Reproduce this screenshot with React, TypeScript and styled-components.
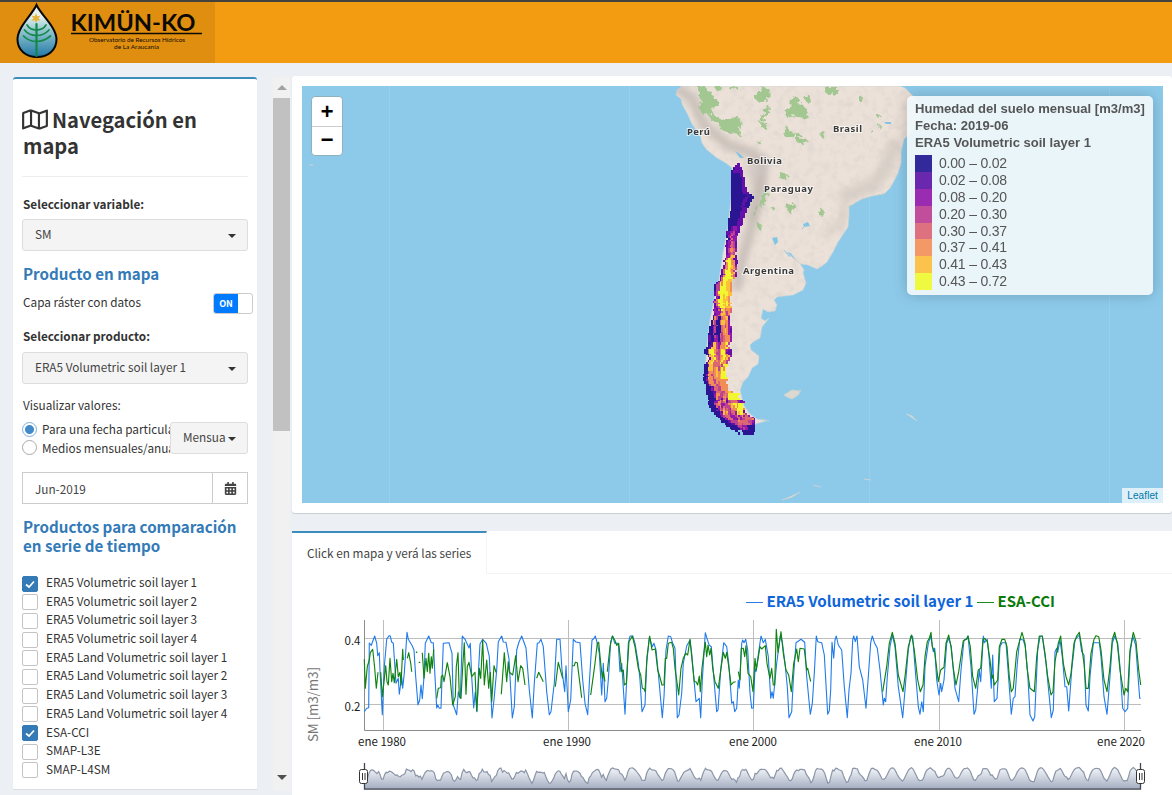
import React from "react";
import styled, { createGlobalStyle } from "styled-components";
import { FaRegMap, FaCalendarAlt } from "react-icons/fa";

const sans = `"Noto Sans CJK SC", "Noto Sans", sans-serif`;

const GlobalStyle = createGlobalStyle`
  *, *::before, *::after { box-sizing: border-box; }
  body {
    margin: 0;
    background: #ecf0f5;
    color: #333;
    font: 11.78px/18px ${sans};
    overflow: hidden;
  }
`;

const Page = styled.div`
  display: flex;
  flex-direction: column;
  width: 1172px;
  height: 795px;
  overflow: hidden;
`;

const Header = styled.header`
  flex: none;
  height: 63px;
  background: #f39c12;
  border-top: 2px solid #43423c;
`;

const Brand = styled.div`
  width: 215px;
  height: 61px;
  background: #e08e0f;
`;

const Content = styled.div`
  flex: 1;
  min-height: 0;
  display: flex;
`;

const Sidebar = styled.aside`
  width: 244px;
  height: 712px;
  margin: 14px 15px 0 13px;
  padding: 0 9px;
  background: #fff;
  border-top: 2px solid #3c8dbc;
  border-radius: 3px 3px 0 0;
  box-shadow: 0 1px 1px rgba(0, 0, 0, 0.08);
`;

const Title = styled.h2`
  height: 98px;
  margin: 0;
  padding: 28px 0 0 1px;
  border-bottom: 1px solid #eee;
  font-size: 20.15px;
  font-weight: 700;
  line-height: 25.5px;
  white-space: nowrap;

  svg {
    width: 26px;
    height: 23px;
    margin: 0 4px 0 -1px;
    vertical-align: -3px;
  }
`;

const Subtitle = styled.h4<{ $top: number }>`
  margin: ${(p) => p.$top}px 0 0;
  padding-left: 1px;
  color: #337ab7;
  font-size: 15.15px;
  font-weight: 700;
  line-height: 19px;
  white-space: nowrap;
`;

const Label = styled.div<{ $top: number; $bold?: boolean }>`
  margin-top: ${(p) => p.$top}px;
  padding-left: 1px;
  font-weight: ${(p) => (p.$bold ? 700 : 400)};
  line-height: 18px;
  white-space: nowrap;
`;

const SwitchRow = styled.div`
  display: flex;
  justify-content: space-between;
  align-items: flex-start;
  margin: 10px -5px 0 0;
  padding-left: 1px;
`;

const Switch = styled.div`
  display: flex;
  width: 40px;
  height: 21px;
  border: 1px solid #ccc;
  border-radius: 3px;
  overflow: hidden;
  background: #fff;

  span {
    width: 24px;
    background: #007bff;
    color: #fff;
    font: 700 9px/19px ${sans};
    text-align: center;
  }
`;

const Select = styled.div<{ $top?: number; $width?: number }>`
  display: flex;
  justify-content: space-between;
  align-items: center;
  width: ${(p) => p.$width ?? 226}px;
  height: 32px;
  margin-top: ${(p) => p.$top ?? 0}px;
  padding: 0 11px 3px 12px;
  border: 1px solid #ddd;
  border-radius: 3px;
  background: #f4f4f4;
  color: #444;
  white-space: nowrap;
`;

const Caret = styled.i`
  border: 4px solid transparent;
  border-top-color: #333;
  border-bottom: 0;
  margin-top: 4px;
`;

const PeriodRow = styled.div`
  display: flex;
  height: 40px;
  margin-top: 6px;
`;

const RadioList = styled.div`
  width: 148px;
  overflow: hidden;
`;

const RadioItem = styled.div`
  display: flex;
  align-items: center;
  gap: 5px;
  height: 18.5px;
  white-space: nowrap;
`;

const RadioDot = styled.i<{ $on?: boolean }>`
  flex: none;
  width: 15px;
  height: 15px;
  border: 1px solid ${(p) => (p.$on ? "#7fb0d8" : "#aaa")};
  border-radius: 50%;
  background: ${(p) => (p.$on ? "radial-gradient(circle, #428bca 4px, #fff 5px)" : "#fff")};
`;

const DateField = styled.div`
  display: flex;
  height: 32px;
  margin-top: 12px;
  border: 1px solid #ccc;
  color: #444;
  line-height: 31px;

  span { flex: 1; padding-left: 12px; }
  b {
    display: grid;
    place-items: center;
    width: 35px;
    border-left: 1px solid #ccc;
  }
`;

const CheckList = styled.div`
  margin-top: 19px;
`;

const CheckItem = styled.div`
  display: flex;
  gap: 8px;
  height: 18.7px;
  white-space: nowrap;
`;

const CheckBox = styled.i<{ $on?: boolean }>`
  width: 16px;
  height: 16px;
  margin-top: 1.5px;
  border: 1px solid ${(p) => (p.$on ? "#337ab7" : "#c4c4c4")};
  border-radius: 2px;
  background: ${(p) => (p.$on ? "#337ab7" : "#fff")};

  svg { display: block; }
`;

const CheckText = styled.span`
  line-height: 16px;
`;

const ScrollTrack = styled.div`
  display: flex;
  flex-direction: column;
  align-items: center;
  width: 17px;
  height: 714px;
  margin: 14px 3px 0 1px;
  background: #f1f1f1;
`;

const ScrollThumb = styled.div`
  width: 17px;
  height: 333px;
  margin-top: 8px;
  background: #c1c1c1;
`;

const ScrollArrow = styled.i<{ $down?: boolean }>`
  border: 5px solid transparent;
  ${(p) =>
    p.$down
      ? "border-top-color:#505050;border-bottom:0;margin-top:auto;margin-bottom:11px;"
      : "border-bottom-color:#a3a3a3;border-top:0;margin-top:8px;"}
`;

const Main = styled.main`
  flex: 1;
  min-width: 0;
  margin-left: -1px;
  display: flex;
  flex-direction: column;
`;

const MapBox = styled.section`
  position: relative;
  flex: none;
  height: 437px;
  margin-top: 13px;
  padding: 10px 9px 10px 10px;
  background: #fff;
  border-radius: 3px;
  box-shadow: 0 1px 1px rgba(0, 0, 0, 0.15);

  > svg { display: block; }
`;

const ZoomControl = styled.div`
  position: absolute;
  left: 19px;
  top: 20px;
  width: 32px;
  border: 1px solid #8fb0bf;
  border-radius: 4px;
  background: #fff;
`;

const ZoomButton = styled.div`
  display: grid;
  place-items: center;
  height: 29px;
  color: #000;
  font: 700 22px/28px "Liberation Mono", monospace;
  padding-top: 3px;

  & + & { border-top: 1px solid #ccc; padding-top: 1px; }
`;

const Legend = styled.div`
  position: absolute;
  left: 615px;
  top: 20px;
  width: 246px;
  height: 199px;
  padding: 4px 8px;
  border-radius: 5px;
  background: rgba(240, 248, 251, 0.94);
  box-shadow: 0 0 15px rgba(0, 0, 0, 0.2);
  color: #555;
  font: 14px/17px "Liberation Sans", sans-serif;
  white-space: nowrap;
`;

const LegendTitle = styled.div`
  font-size: 13.05px;
  font-weight: 700;
`;

const LegendRow = styled.div<{ $color: string }>`
  display: flex;
  gap: 7px;
  height: 16.9px;
  line-height: 16px;
  font-size: 14px;
  letter-spacing: -0.2px;

  &::before {
    content: "";
    width: 17px;
    background: ${(p) => p.$color};
  }
`;

const Scale = styled.div`
  padding-top: 4px;
`;

const Attribution = styled.div`
  position: absolute;
  right: 9px;
  bottom: 10px;
  padding: 0 5px;
  background: rgba(255, 255, 255, 0.7);
  color: #0078a8;
  font: 10px/15px "Liberation Sans", sans-serif;
  letter-spacing: 0.1px;
`;

const SeriesBox = styled.section`
  flex: 1;
  margin-top: 18px;
  background: #fff;
`;

const TabBar = styled.div`
  display: flex;
  height: 43px;
  border-bottom: 1px solid #f4f4f4;
`;

const Tab = styled.div`
  width: 195px;
  height: 43px;
  padding: 11px 0 0 15px;
  border-top: 2px solid #3c8dbc;
  border-right: 1px solid #f4f4f4;
  background: #fff;
  color: #444;
  white-space: nowrap;
`;

/* ---------- series data: coordinates are in thirds of a pixel ---------- */

type Point = [number, number];
const parse = (s: string, ox: number, oy: number): Point[] =>
  s.split(" ").map((p) => {
    const [x, y] = p.split(",").map(Number);
    return [ox + x / 3, oy + y / 3];
  });

const era5: Point[] = [
  ...parse("223,605 230,595 236,593 238,399 244,406 254,378 260,400 263,437 268,428 270,480 277,614 283,470 290,388 297,377 301,378 305,396 310,400 318,520 325,505 328,553 335,500 338,535 343,490 351,367 355,388 362,400 367,408 372,420 377,500 384,584 389,570 393,525 397,566 402,500 406,400 416,378 424,398 430,398 435,500 440,594 443,585 448,595 453,595 460,400 477,398 486,430 490,585 500,614 505,545 511,565 517,378 525,388 537,414 541,400 545,500 551,594 556,545 561,605 566,470 570,402 578,388 589,400 598,440 606,624 613,560 620,480 625,395 635,378 640,396 648,397 657,447 667,624 673,590 680,420 687,396 695,378 708,414 718,540 727,624 733,520 742,400 747,398 753,388 760,410 770,545 778,614 783,605 788,560 793,520 800,388 810,388 816,480 824,545 828,467 835,605 842,570 850,388 858,396 870,398 878,510 885,580 893,614 898,520", 290, 510),
  ...parse("36,180 41,176 46,168 52,190 58,220 65,345 70,250 75,365 80,355 85,300 92,185 98,168 104,190 115,190 120,275 125,250 135,403 140,300 145,190 150,168 158,168 165,190 175,250 180,300 186,395 195,375 200,250 208,172 217,200 222,190 228,210 235,280 247,413 252,350 258,210 265,168 272,170 278,190 285,205 292,413 297,405 305,340 310,250 320,198 330,180 335,220 342,300 348,365 358,355 362,413 367,300 376,158 382,178 388,196 394,200 402,300 410,395 414,390 422,270 431,188 440,200 446,250 455,370 460,365 464,395 470,385 475,300 478,325 485,190 488,180 492,188 497,178 503,210 510,340 515,385 520,384 525,265 528,275 536,215 543,168 550,188 556,178 565,230 572,355 576,335 580,355 590,250 601,168 607,185 615,250 622,320 627,413 635,395 640,300 648,188 663,178 674,187 680,290 691,403 697,370 703,280 709,168 713,185 725,188 733,225 743,403 748,392 752,330 756,187 761,235 765,180 769,168 775,195 785,210 793,320 802,413 807,330 813,280 818,180 821,168 826,185 831,168 838,260 848,300 858,385 865,290 872,188 877,168 884,190 892,205", 580, 580),
  ...parse("30,270 40,375 43,355 47,365 52,290 60,200 67,165 75,200 85,320 98,413 105,330 115,210 122,168 128,170 135,260 145,380 150,403 155,365 160,395 165,260 175,190 182,168 190,215 194,205 200,300 207,345 212,310 215,335 222,300 230,190 236,175 244,200 255,325 266,365 273,270 282,180 290,176 294,168 303,260 312,403 317,390 328,270 332,305 340,168 343,188 352,178 357,230 364,325 368,225 373,365 381,355 390,200 396,188 408,188 415,280 424,403 430,355 435,350 442,250 449,178 460,180 466,200 473,280 480,405 489,423 494,410 503,210 510,170 517,168 528,250 544,413 550,390 555,215 560,205 563,217 570,180 577,230 585,320 590,320 596,393 605,270 615,180 628,165 635,215 642,225 648,375 655,393 660,290 670,188 688,188 693,230 702,350 711,403 720,290 727,190 734,168 743,190 750,260 758,385 765,395 773,385 780,220 788,168 797,195 805,300 809,355 812,355", 870, 580),
];

const esa: Point[][] = [
  ...[
    "223,448 226,535 232,470 238,450 241,428 248,418 254,475 259,535 264,487",
    "272,487 277,560 287,467 291,515 295,525 300,445 305,515 309,490 313,518 320,448 325,500 330,487 333,525 338,418 340,450",
    "352,445 356,428 362,460 365,485",
    "378,428 382,425",
    "386,457 391,457",
    "397,428 402,505 408,445 412,485 416,430 420,490 424,440 427,475 431,418",
    "440,565 445,535 452,533 454,500 458,495 462,515 472,458 480,500 488,585 496,560 499,470 504,428 508,560 513,565 518,470 523,398 528,553 532,470 537,457 545,500 555,487 560,603 568,475 572,505 578,390 583,525 590,450 596,535 601,487 605,575 612,467 618,487",
    "634,553 643,428 650,515 655,455 658,487 668,495 677,437 684,515 692,467 698,475 705,525",
    "740,505 746,487 760,515",
    "796,530 805,457 818,505",
    "846,467 853,467 856,457 862,458 875,563",
  ].map((s) => parse(s, 290, 510)),
  ...[
    "32,345 45,250 52,190 56,187 62,250 67,295 70,275 75,305",
    "82,275 90,200 97,168 104,180 110,196 116,190 125,275 130,270 133,315 139,310 147,185 157,168 165,200 175,265 182,285 187,325 193,328 195,335 201,230 209,168 216,210 226,207 233,270 238,285 246,315 252,315 256,235 260,235 265,190 275,187 280,205 285,265 290,300 296,345 303,265 310,235 317,220 323,225 330,178 338,260 343,305 348,305 353,315 358,288 361,335 366,265 372,215 376,187 380,230 384,195 389,225 393,205 398,265 405,305 415,325 423,265 430,217 436,235 440,217 447,265 453,315 460,307 467,305",
    "475,275 480,300 484,205 490,205 494,230 498,197 504,280 512,290 519,335 525,235 529,270 540,200 545,207 556,197 561,250 570,295 575,265 580,315 584,315 589,148 594,217 603,155 610,220 618,270 626,285 634,335 641,250 650,207 655,245 660,205 673,207 680,270 683,265 692,305",
  ].map((s) => parse(s, 580, 580)),
  parse("38,335 50,260 58,190 67,157 75,190 85,285 99,335 105,290 115,200 125,165 133,210 143,300 151,335 159,315 165,230 172,185 178,175 183,157 187,200 194,215 205,305 212,270 222,262 228,190 236,165 243,200 250,265 258,315 266,275 272,235 280,182 290,178 294,168 301,200 308,290 317,325 325,270 332,265 339,178 344,175 352,185 360,240 366,295 369,285 373,315 383,300 388,200 396,178 404,178 411,200 418,290 424,335 430,325 440,215 456,157 465,190 472,270 480,325 493,335 500,230 508,168 517,168 525,220 533,290 543,345 549,335 555,245 565,190 572,168 580,250 588,290 596,315 603,280 612,190 620,168 628,157 635,200 642,250 648,325 655,325 663,220 672,178 678,167 686,170 693,210 702,300 711,335 720,260 727,178 734,157 742,190 750,270 762,345 767,325 773,335 780,210 790,157 798,185 806,270 812,315", 870, 580),
];

const valueAt = (pts: Point[], x: number): number | null => {
  for (let i = 1; i < pts.length; i++) {
    const [x0, y0] = pts[i - 1];
    const [x1, y1] = pts[i];
    if (x >= x0 && x <= x1) return y0 + ((y1 - y0) * (x - x0)) / (x1 - x0 || 1);
  }
  return null;
};

const toPath = (pts: Point[]) => "M" + pts.map(([x, y]) => `${x.toFixed(1)},${y.toFixed(1)}`).join("L");

const overview: Point[] = [];
for (let x = 364.5; x <= 1140.5; x += 1.55) {
  const values = [valueAt(era5, x), ...esa.map((s) => valueAt(s, x))].filter((v): v is number => v !== null);
  const mean = values.reduce((a, b) => a + b, 0) / values.length;
  overview.push([x, 767 + (mean - 632) * 0.2]);
}

/* ---------- raster layer: [y, first x, then "end x, class" pairs] ---------- */

const palette = ["#2a1593", "#6410a9", "#941aaa", "#bc4292", "#dc6672", "#f18e55", "#fcbf3b", "#f1f631"];

const upper: number[][] = [
  [250, 228, 240, 1], [270, 216, 222, 0, 246, 1], [290, 216, 242, 0, 252, 1], [310, 216, 241, 0, 252, 1],
  [330, 216, 247, 0, 262, 1], [345, 216, 262, 0, 269, 1, 278, 0], [358, 214, 250, 0, 260, 1, 276, 0], [370, 214, 242, 0, 254, 1, 270, 0],
  [390, 210, 240, 0, 258, 1], [410, 207, 236, 0, 250, 1], [430, 204, 230, 0, 250, 1], [442, 205, 213, 0, 222, 1, 232, 2, 240, 1],
  [456, 197, 207, 1, 215, 2, 225, 3, 238, 1], [470, 202, 207, 0, 212, 2, 218, 4, 230, 2], [490, 196, 204, 1, 210, 2, 218, 4, 225, 3, 229, 1],
  [510, 198, 203, 1, 208, 3, 218, 5, 222, 4, 227, 2], [530, 196, 200, 1, 205, 3, 217, 6, 222, 5, 230, 1], [545, 190, 195, 1, 200, 5, 218, 7, 224, 5, 233, 1],
  [565, 186, 190, 1, 195, 4, 216, 7, 222, 5, 229, 2], [590, 176, 182, 0, 187, 2, 193, 5, 212, 7, 218, 4, 225, 1],
];
const lower: number[][] = [
  [12, 183, 190, 1, 196, 4, 214, 7, 222, 5, 225, 3], [30, 172, 178, 1, 184, 4, 200, 7, 212, 6, 216, 5], [45, 163, 170, 0, 176, 3, 197, 7, 212, 6, 215, 5],
  [75, 166, 170, 1, 176, 3, 200, 7, 205, 6, 211, 5], [100, 160, 167, 1, 174, 4, 189, 7, 205, 6, 211, 5], [125, 161, 168, 1, 176, 2, 184, 4, 195, 6, 210, 5],
  [150, 152, 160, 0, 164, 5, 170, 3, 180, 0, 186, 4, 203, 6, 208, 5, 212, 2], [177, 148, 160, 0, 164, 2, 169, 3, 182, 0, 190, 4, 206, 5, 214, 2], [205, 142, 151, 1, 160, 0, 170, 2, 177, 0, 190, 4, 204, 5, 211, 2],
  [225, 140, 148, 0, 155, 3, 168, 6, 180, 2, 190, 5, 200, 6, 207, 3], [243, 134, 143, 0, 150, 4, 169, 7, 178, 3, 185, 5, 195, 7, 203, 5, 216, 1], [265, 146, 150, 1, 160, 6, 166, 7, 175, 4, 187, 5, 195, 7, 205, 5, 210, 2],
  [290, 132, 140, 0, 145, 2, 158, 6, 164, 4, 180, 5, 186, 5, 200, 7], [310, 131, 142, 0, 147, 2, 157, 5, 165, 3, 183, 5, 200, 7], [335, 132, 143, 0, 150, 3, 161, 5, 170, 3, 180, 5, 200, 5],
  [360, 137, 152, 0, 160, 1, 172, 4, 181, 3, 201, 5], [367, 141, 160, 0, 169, 1, 178, 5, 190, 3, 203, 4, 236, 7], [384, 141, 164, 0, 169, 1, 178, 5, 190, 3, 203, 4, 238, 7],
  [390, 145, 167, 0, 172, 2, 180, 4, 201, 5, 212, 3, 232, 4, 240, 2, 253, 1],
  [407, 150, 170, 0, 181, 3, 192, 4, 210, 3, 224, 5, 251, 7], [425, 160, 175, 0, 186, 2, 201, 5, 215, 3, 228, 4, 250, 7, 256, 3], [440, 172, 190, 0, 200, 2, 215, 4, 231, 2, 250, 3, 275, 4, 281, 2],
  [455, 185, 206, 0, 216, 1, 231, 3, 265, 4, 275, 3, 284, 1], [470, 208, 233, 0, 240, 2, 252, 3, 262, 2, 284, 0], [486, 237, 244, 0, 250, -1, 281, 0],
];
const rows = [
  ...upper.map((r) => r.map((v, i) => (i === 0 ? 80 + v / 3 : v))),
  ...lower.map((r) => r.map((v, i) => (i === 0 ? 270 + v / 3 : v))),
];

const noise = (a: number, b: number) => {
  const s = Math.sin(a * 12.9898 + b * 78.233) * 43758.5453;
  return s - Math.floor(s);
};

const cell = 1.7;
const cells: { x: number; y: number; c: number }[] = [];
for (let y = 163.2, j = 0; y < 433.5; y += cell, j++) {
  let k = 0;
  while (k < rows.length - 2 && rows[k + 1][0] <= y) k++;
  const a = rows[k];
  const b = rows[k + 1];
  const t = Math.max(0, Math.min(1, (y - a[0]) / (b[0] - a[0])));
  const near = t < 0.5 ? a : b;
  const south = y > 250;
  const band = Math.floor(j / 2);
  const edge = (noise(band, 9) - 0.5) * (south ? 6 : 4);
  const left = a[1] + (b[1] - a[1]) * t + edge;
  const ra = a[a.length - 2];
  const rb = b[b.length - 2];
  const right = ra + (rb - ra) * t + (noise(band, 17) - 0.5) * (south ? 5 : 4);
  const nr = near[near.length - 2];
  const first = Math.round(left / 3 / cell);
  const last = Math.round(right / 3 / cell);
  for (let i = first; i < last; i++) {
    const u = near[1] + ((i + 0.5 - first) / (last - first)) * (nr - near[1]);
    let c = 0;
    for (let m = 2; m < near.length; m += 2) {
      if (u <= near[m]) { c = near[m + 1]; break; }
    }
    if (c < 0) continue;
    const n = noise(i, Math.floor((j + (i % 3)) / 3));
    if (south && c > 0 && !(y > 391 && y < 399 && c === 7)) {
      if (n < 0.05) c = Math.max(1, c - 2);
      else if (n < 0.15) c = Math.max(1, c - 1);
      else if (n > 0.86) c = Math.min(7, c + 1);
    }
    cells.push({ x: 660 + i * cell, y, c });
  }
}

const land =
  "M682,86 L677,90 L676,95 L681,99 L682,104 L688,115 L692,124 L700,135 L702,143 L706,149 L717,158 L726,163 L732,168 L732,190 L728,227 L723,253 L719,280 L714,300 L710,320 L707,345 L705,370 L710,400 L727,423 L748,433 L755,424 L766,421 L757,419 L750,414 L744,406 L742,398 L740,390 L743,382 L748,377 L752,368 L758,364 L759,356 L751,350 L750,345 L753,342 L760,338 L762,327 L766,322 L769,318 L765,321 L761,318 L763,309 L768,312 L775,311 L777,305 L774,300 L777,297 L784,296 L793,295 L803,290 L806,283 L803,273 L804,270 L799,262 L793,258 L786,252 L791,253 L796,260 L801,264 L808,265 L817,269 L822,266 L827,262 L833,252 L838,242 L844,233 L848,227 L849,216 L849,207 L855,203 L862,199 L872,196 L884,194 L890,188 L894,181 L898,173 L901,163 L901,152 L904,139 L911,133 L922,116 L919,102 L910,93 L905,88 L900,86 Z";

const forests =
  "M699,86l6,0 2,5 5,1 1,6 5,2 1,7 -6,-1 -3,8 8,7 -6,1 -5,-9 -5,1 -4,-8 4,-4 -3,-6z M704,98l7,9 4,9 7,4 6,-2 11,-1 4,8 -4,3 2,9 -5,-3 -6,-1 -9,-3 -3,-8 -4,-3 -4,-10z M713,86l8,0 2,4 -6,1z M729,86l6,1 -4,4z M756,93l5,-3 0,-4 8,3 1,8 -4,4 -6,2 -6,-5z M764,108l5,-3 1,5 -4,7 -5,5 -2,-4 5,-4z M760,122l7,1 -1,6 -5,-2z M791,100l5,-4 4,4 -2,4 6,2 4,7 -1,6 -8,-1 -5,-3 -8,2 -1,-5 5,-4z M804,98l6,-3 1,5 -4,3z M824,87h13v7l-8,1-4,-3z M784,124l4,3 0,4 7,1 -3,6 -8,-2 1,-5z M796,133l6,2 -3,4 6,-1 4,4 -7,2 -6,-3z M757,142l6,-1 -3,4z M733,86h4l1,4z M876,114l5,1 -2,4z M859,96l4,1 -1,5 -3,-1z M878,124l3,1 -1,4z M872,130l2,2 -3,2z M763,191l6,2 -3,4 -3,10 -4,-1 2,-9z M785,203l6,2 3,-2 2,5 -5,1 1,5 -4,-2z M821,208l3,3 -1,5 -4,-1z M819,134l4,-3 3,2 -4,5z M781,173l8,2 -4,4 -5,0z M756,222l6,3 -1,6 -3,-2z M771,206l4,1 -3,3z";

const SouthAmerica = () => (
  <svg width="861" height="417" viewBox="302 86 861 417">
    <defs>
      <clipPath id="land"><path d={land} /></clipPath>
      <filter id="relief" x="0" y="0" width="100%" height="100%">
        <feTurbulence type="fractalNoise" baseFrequency="0.13" numOctaves="4" seed="4" />
        <feColorMatrix values="0 0 0 0 .6  0 0 0 0 .59  0 0 0 0 .58  2.2 0 0 0 -1" />
      </filter>
      <filter id="ragged" x="-5%" y="-5%" width="110%" height="110%">
        <feTurbulence type="fractalNoise" baseFrequency="0.25" numOctaves="2" seed="7" />
        <feDisplacementMap in="SourceGraphic" scale="6" />
      </filter>
      <filter id="soft"><feGaussianBlur stdDeviation="3" /></filter>
    </defs>
    <rect x="302" y="86" width="861" height="417" fill="#8dcaea" />
    <path d="M389.500,86V503M629.500,86V503M869.500,86V503M1109.500,86V503" stroke="#98cfec" strokeWidth="1" />
    <path d={land} fill="#ece1d8" stroke="#c9d6d6" strokeWidth="0.6" />
    <g clipPath="url(#land)">
      <g filter="url(#soft)">
        <path d="M676,88L692,98L704,125L728,145L752,153L764,162L760,195L752,225L742,260L736,290" fill="none" stroke="#b5aca6" strokeWidth="10" opacity="0.6" />
        <path d="M752,160L758,190L748,220" fill="none" stroke="#bdb4ae" strokeWidth="14" opacity="0.45" />
        <path d="M896,140L885,170L872,186L840,198" fill="none" stroke="#c8c0ba" strokeWidth="14" opacity="0.5" />
        <path d="M847,205L840,225L825,233" fill="none" stroke="#c8c0ba" strokeWidth="8" opacity="0.45" />
      </g>
      <rect x="670" y="86" width="245" height="350" filter="url(#relief)" opacity="0.42" />
      <path d={forests} fill="#9bc58a" opacity="0.9" filter="url(#ragged)" />
      <path d="M849,207L862,200L884,194M757,206L754,216M762,318l4,2" stroke="#8fbd86" strokeWidth="1.5" fill="none" opacity="0.7" strokeDasharray="4 2" />
      <path d="M735,151l5,3 4,4 -4,0z M772,238l5,-1 1,5 -3,3z M786,252l4,4 -1,1z M803,224l5,-2 2,4 -6,1z M884,122l7,0 0,2 -5,0z" fill="#80c5e4" />
      <path d="M784,250l3,4M802,229l4,-4" stroke="#9ccbd9" strokeWidth="1" fill="none" />
    </g>
    <path d="M784,395l8,-5 8,1 -2,4 -6,4 -5,-2z M801,390l-3,5M906,414l6,2 5,5M782,500l10,-3 8,-5M813,485l8,2M864,479l7,1M309,165h4M761,419l8,2" fill="#ded9d0" stroke="#c9d3d2" strokeWidth="1" />
    <g shapeRendering="crispEdges">
      {cells.map((c, i) => (
        <rect key={i} x={c.x} y={c.y} width={cell + 0.1} height={cell + 0.1} fill={palette[c.c]} />
      ))}
    </g>
    <g fontFamily="Noto Sans, sans-serif" fontSize="9.500" fontWeight="700" fill="#3a3a3a" stroke="#fff" strokeWidth="2" strokeOpacity="0.65" paintOrder="stroke">
      <text x="687" y="134.500" textLength="23">Perú</text>
      <text x="833" y="132" textLength="29">Brasil</text>
      <text x="747" y="164" textLength="35">Bolivia</text>
      <text x="764" y="192" textLength="49">Paraguay</text>
      <text x="743" y="274" textLength="51">Argentina</text>
    </g>
  </svg>
);

const Logo = () => (
  <svg width="215" height="61" viewBox="0 2 215 61">
    <defs>
      <linearGradient id="drop" x1="0" y1="0" x2="0" y2="1">
        <stop offset="0.2" stopColor="#e8f4f3" />
        <stop offset="0.5" stopColor="#8fc4cd" />
        <stop offset="1" stopColor="#2278a8" />
      </linearGradient>
    </defs>
    <path d="M36.500,5C32,15 17.500,27 17.500,39.500C17.500,50 26,57 37,57C48,57 56.500,50 56.500,39.500C56.500,27 41,15 36.500,5Z" fill="url(#drop)" stroke="#080808" strokeWidth="2" />
    <path d="M36,13l1.200,3.200 3.400,-.6 -2.200,2.600 2.200,2.600 -3.400,-.6 -1.200,3 -1.200,-3 -3.400,.6 2.200,-2.600 -2.200,-2.600 3.400,.6z" fill="#e9b23c" />
    <g fill="none" stroke="#12884a" strokeWidth="1.700" strokeLinecap="round">
      <path d="M36.500,24V56" strokeWidth="2.200" />
      <path d="M27,25Q30,30 36.500,30Q43,30 46,25M24.500,30Q29,35.500 36.500,35.500Q44,35.500 49,30M23.500,36Q29,41.500 36.500,41.500Q44,41.500 50.500,36" />
    </g>
    <g fill="#0c0a05">
      <text x="70.500" y="30.500" fontFamily="Lato, sans-serif" fontSize="22" fontWeight="700" textLength="125" lengthAdjust="spacingAndGlyphs">KIMÜN-KO</text>
      <path d="M71,33.500H202" stroke="#0c0a05" strokeWidth="1.700" />
      <g fontFamily="Lato, sans-serif" fontSize="6.200">
        <text x="89" y="42" textLength="96" lengthAdjust="spacingAndGlyphs">Observatorio de Recursos Hídricos</text>
        <text x="114" y="49" textLength="45" lengthAdjust="spacingAndGlyphs">de La Araucanía</text>
      </g>
    </g>
  </svg>
);

const Handle = ({ x }: { x: number }) => (
  <g>
    <rect x={x - 4} y="769.500" width="8" height="14" rx="2" fill="#fff" stroke="#333" />
    <path d={`M${x - 1},773V780M${x + 1.5},773V780`} stroke="#333" />
  </g>
);

const ChartSvg = styled.svg`
  display: block;
`;

const SeriesChart = () => (
  <ChartSvg width="880" height="221" viewBox="292 574 880 221">
    <defs>
      <linearGradient id="overview" x1="0" y1="0" x2="0" y2="1">
        <stop offset="0" stopColor="#f4f6f9" />
        <stop offset="1" stopColor="#a7b1c4" />
      </linearGradient>
    </defs>
    <g fontFamily="Noto Sans CJK SC, sans-serif" fontSize="15" fontWeight="700">
      <path d="M746,602.500H763" stroke="#2b7de0" />
      <text x="766.500" y="607" fill="#0e65da" textLength="207" lengthAdjust="spacingAndGlyphs">ERA5 Volumetric soil layer 1</text>
      <path d="M977,602.500H994" stroke="#1a8a1a" />
      <text x="997.500" y="607" fill="#0a7a0a" textLength="57.500" lengthAdjust="spacingAndGlyphs">ESA-CCI</text>
    </g>
    <path d="M364,638.500H1141M364,704.500H1141M383.500,620V730M568.500,620V730M753.500,620V730M939.500,620V730M1124.500,620V730" stroke="#bdbdbd" fill="none" />
    <path d="M364.500,620V730.500H1141" stroke="#8c8c8c" fill="none" />
    <path d={toPath(era5)} fill="none" stroke="#1f7bea" strokeWidth="1.100" strokeLinejoin="round" />
    <path d={esa.map(toPath).join("")} fill="none" stroke="#0f830f" strokeWidth="1.150" strokeLinejoin="round" />
    <g fontFamily="Noto Sans CJK SC, sans-serif" fontSize="11.500" fill="#222">
      <text x="344.500" y="645" textLength="16">0.4</text>
      <text x="344.500" y="711" textLength="16">0.2</text>
      <text x="358" y="746" textLength="48">ene 1980</text>
      <text x="543" y="746" textLength="48">ene 1990</text>
      <text x="729" y="746" textLength="48">ene 2000</text>
      <text x="914" y="746" textLength="48">ene 2010</text>
      <text x="1097" y="746" textLength="48">ene 2020</text>
    </g>
    <text transform="translate(317.500,742) rotate(-90)" fontFamily="Noto Sans CJK SC, sans-serif" fontSize="13.500" fill="#777" textLength="75">SM [m3/m3]</text>
    <path d={`${toPath(overview)}L1140.500,788L364.500,788Z`} fill="url(#overview)" />
    <path d={toPath(overview)} fill="none" stroke="#8b95a8" strokeWidth="1.200" />
    <path d="M364.500,763V789H1140.500V763" fill="none" stroke="#3f4654" strokeWidth="1.300" />
    <Handle x={363.5} />
    <Handle x={1140.5} />
  </ChartSvg>
);

const products: [string, boolean][] = [
  ["ERA5 Volumetric soil layer 1", true],
  ["ERA5 Volumetric soil layer 2", false],
  ["ERA5 Volumetric soil layer 3", false],
  ["ERA5 Volumetric soil layer 4", false],
  ["ERA5 Land Volumetric soil layer 1", false],
  ["ERA5 Land Volumetric soil layer 2", false],
  ["ERA5 Land Volumetric soil layer 3", false],
  ["ERA5 Land Volumetric soil layer 4", false],
  ["ESA-CCI", true],
  ["SMAP-L3E", false],
  ["SMAP-L4SM", false],
];

const classes: [string, string][] = [
  ["#32299a", "0.00 – 0.02"],
  ["#6a28af", "0.02 – 0.08"],
  ["#9a2cb1", "0.08 – 0.20"],
  ["#c14e9b", "0.20 – 0.30"],
  ["#de717f", "0.30 – 0.37"],
  ["#f39867", "0.37 – 0.41"],
  ["#fbc34b", "0.41 – 0.43"],
  ["#eff93f", "0.43 – 0.72"],
];

export default function App() {
  return (
    <Page>
      <GlobalStyle />
      <Header>
        <Brand><Logo /></Brand>
      </Header>
      <Content>
        <Sidebar>
          <Title><FaRegMap />Navegación en<br />mapa</Title>
          <Label $top={18} $bold>Seleccionar variable:</Label>
          <Select $top={6}>SM<Caret /></Select>
          <Subtitle $top={13}>Producto en mapa</Subtitle>
          <SwitchRow>
            Capa ráster con datos
            <Switch><span>ON</span></Switch>
          </SwitchRow>
          <Label $top={13} $bold>Seleccionar producto:</Label>
          <Select $top={7}>ERA5 Volumetric soil layer 1<Caret /></Select>
          <Label $top={12}>Visualizar valores:</Label>
          <PeriodRow>
            <RadioList>
              <RadioItem><RadioDot $on />Para una fecha particular</RadioItem>
              <RadioItem><RadioDot />Medios mensuales/anuales</RadioItem>
            </RadioList>
            <Select $width={78} $top={2}>Mensua<Caret /></Select>
          </PeriodRow>
          <DateField><span>Jun-2019</span><b><FaCalendarAlt size={13} /></b></DateField>
          <Subtitle $top={13}>Productos para comparación<br />en serie de tiempo</Subtitle>
          <CheckList>
            {products.map(([name, on]) => (
              <CheckItem key={name}>
                <CheckBox $on={on}>
                  {on && (
                    <svg width="14" height="14" viewBox="0 0 14 14">
                      <path d="M3,7.500L6,10L11,4.500" fill="none" stroke="#fff" strokeWidth="1.700" />
                    </svg>
                  )}
                </CheckBox>
                <CheckText>{name}</CheckText>
              </CheckItem>
            ))}
          </CheckList>
        </Sidebar>
        <ScrollTrack>
          <ScrollArrow />
          <ScrollThumb />
          <ScrollArrow $down />
        </ScrollTrack>
        <Main>
          <MapBox>
            <SouthAmerica />
            <ZoomControl>
              <ZoomButton>+</ZoomButton>
              <ZoomButton>−</ZoomButton>
            </ZoomControl>
            <Legend>
              <LegendTitle>Humedad del suelo mensual [m3/m3]</LegendTitle>
              <LegendTitle>Fecha: 2019-06</LegendTitle>
              <LegendTitle>ERA5 Volumetric soil layer 1</LegendTitle>
              <Scale>
                {classes.map(([color, range]) => (
                  <LegendRow key={range} $color={color}>{range}</LegendRow>
                ))}
              </Scale>
            </Legend>
            <Attribution>Leaflet</Attribution>
          </MapBox>
          <SeriesBox>
            <TabBar><Tab>Click en mapa y verá las series</Tab></TabBar>
            <SeriesChart />
          </SeriesBox>
        </Main>
      </Content>
    </Page>
  );
}
